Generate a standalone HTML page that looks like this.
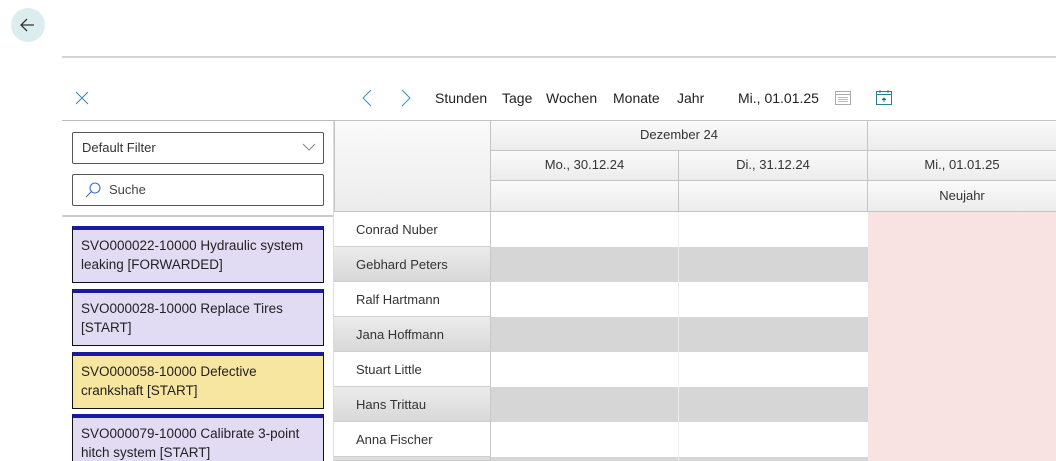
<!DOCTYPE html>
<html style="overflow:hidden"><head><style>
*{box-sizing:border-box;margin:0;padding:0}
html,body{width:1056px;height:461px;overflow:hidden}
body{background:#fff;font-family:"Liberation Sans",sans-serif;font-size:13px;color:#222}
#w{position:relative;width:1056px;height:461px;overflow:hidden}
.a{position:absolute}
.t{position:absolute;top:90px;font-size:14px;color:#222}
.hdr{background:linear-gradient(#fafafa,#ececec);border:1px solid #c4c4c4;text-align:center;line-height:28px;color:#333}
.card{position:absolute;left:72px;width:252px;height:57px;border:1px solid #111;border-top:4px solid #1a1aa0;padding:6px 8px;line-height:19px;font-size:13.5px;color:#222}
.nm{position:absolute;left:334px;width:157px;height:35px;border-bottom:1px solid #cfcfcf;border-right:1px solid #c8c8c8;padding-left:22px;line-height:35px;color:#333}
</style></head><body><div id="w">
<div class="a" style="left:11px;top:8px;width:34px;height:34px;border-radius:50%;background:#dcedf0"></div>
<svg class="a" style="left:18px;top:15px" width="20" height="20"><path d="M16 10H3M9 4L3 10L9 16" stroke="#333" stroke-width="1.3" fill="none"/></svg>
<div class="a" style="left:62px;top:56px;width:994px;height:2px;background:#d4d4d8"></div>
<svg class="a" style="left:75px;top:91px" width="14" height="14"><path d="M1 1L13 13M13 1L1 13" stroke="#3a7fb0" stroke-width="1"/></svg>
<svg class="a" style="left:361px;top:89px" width="12" height="18"><path d="M10 1L2 9L10 17" stroke="#3a8fc0" stroke-width="1" fill="none"/></svg>
<svg class="a" style="left:400px;top:89px" width="12" height="18"><path d="M2 1L10 9L2 17" stroke="#3a8fc0" stroke-width="1" fill="none"/></svg>
<div class="t" style="left:435px">Stunden</div>
<div class="t" style="left:502px">Tage</div>
<div class="t" style="left:546px">Wochen</div>
<div class="t" style="left:613px">Monate</div>
<div class="t" style="left:677px">Jahr</div>
<div class="t" style="left:738px">Mi., 01.01.25</div>
<svg class="a" style="left:835px;top:89px" width="16" height="16"><rect x="0.5" y="2.5" width="15" height="13" fill="none" stroke="#aaa"/><path d="M0 5.5H16" stroke="#aaa"/><g fill="#bbb"><rect x="3" y="8" width="10" height="1"/><rect x="3" y="10" width="10" height="1"/><rect x="3" y="12" width="10" height="1"/></g></svg>
<svg class="a" style="left:876px;top:89px" width="16" height="16"><rect x="0.5" y="2.5" width="15" height="13" fill="none" stroke="#2a7f95"/><path d="M0 5.5H16M4 1V4M12 1V4M8 13V9M6 11L8 9L10 11" stroke="#2a7f95"/></svg>
<div class="a" style="left:62px;top:120px;width:994px;height:1px;background:#bbb"></div>
<div class="a" style="left:62px;top:215px;width:272px;height:2px;background:#ccc"></div>
<div class="a" style="left:72px;top:132px;width:252px;height:32px;border:1px solid #555;border-radius:2px;padding-left:9px;line-height:30px;color:#333">Default Filter</div>
<svg class="a" style="left:302px;top:142px" width="14" height="10"><path d="M1 2L7 8L13 2" stroke="#888" fill="none"/></svg>
<div class="a" style="left:72px;top:174px;width:252px;height:32px;border:1px solid #555;border-radius:2px;padding-left:36px;line-height:30px;color:#444">Suche</div>
<svg class="a" style="left:84px;top:181px" width="18" height="18"><circle cx="11" cy="7" r="5" fill="none" stroke="#3a6fd0" stroke-width="1.1"/><path d="M7.5 10.5L2 16" stroke="#3a6fd0" stroke-width="1.1"/></svg>
<div class="card" style="top:226px;background:#e2dbf4">SVO000022-10000 Hydraulic system leaking [FORWARDED]</div>
<div class="card" style="top:289px;background:#e2dbf4">SVO000028-10000 Replace Tires [START]</div>
<div class="card" style="top:352px;background:#f7e6a0">SVO000058-10000 Defective crankshaft [START]</div>
<div class="card" style="top:414px;height:60px;background:#e2dbf4">SVO000079-10000 Calibrate 3-point hitch system [START]</div>
<div class="a" style="left:333px;top:121px;width:2px;height:340px;background:#ddd"></div>
<div class="a hdr" style="left:334px;top:120px;width:157px;height:92px"></div>
<div class="a hdr" style="left:490px;top:120px;width:378px;height:31px">Dezember 24</div>
<div class="a hdr" style="left:867px;top:120px;width:190px;height:31px"></div>
<div class="a hdr" style="left:490px;top:150px;width:189px;height:31px">Mo., 30.12.24</div>
<div class="a hdr" style="left:678px;top:150px;width:190px;height:31px">Di., 31.12.24</div>
<div class="a hdr" style="left:867px;top:150px;width:190px;height:31px">Mi., 01.01.25</div>
<div class="a hdr" style="left:490px;top:180px;width:189px;height:32px"></div>
<div class="a hdr" style="left:678px;top:180px;width:190px;height:32px"></div>
<div class="a hdr" style="left:867px;top:180px;width:190px;height:32px;line-height:30px">Neujahr</div>
<div class="a" style="left:491px;top:212px;width:565px;height:249px;background:repeating-linear-gradient(#fff 0 35px,#d6d6d6 35px 70px)"></div>
<div class="a" style="left:678px;top:212px;width:1px;height:249px;background:#eee"></div>
<div class="a" style="left:868px;top:212px;width:188px;height:249px;background:#f8e3e2"></div>
<div class="nm" style="top:212px;background:#fff">Conrad Nuber</div>
<div class="nm" style="top:247px;background:linear-gradient(#ececec,#d8d8d8)">Gebhard Peters</div>
<div class="nm" style="top:282px;background:#fff">Ralf Hartmann</div>
<div class="nm" style="top:317px;background:linear-gradient(#ececec,#d8d8d8)">Jana Hoffmann</div>
<div class="nm" style="top:352px;background:#fff">Stuart Little</div>
<div class="nm" style="top:387px;background:linear-gradient(#ececec,#d8d8d8)">Hans Trittau</div>
<div class="nm" style="top:422px;background:#fff">Anna Fischer</div>
<div class="nm" style="top:457px;height:4px;background:#ddd"></div>
</div></body></html>
